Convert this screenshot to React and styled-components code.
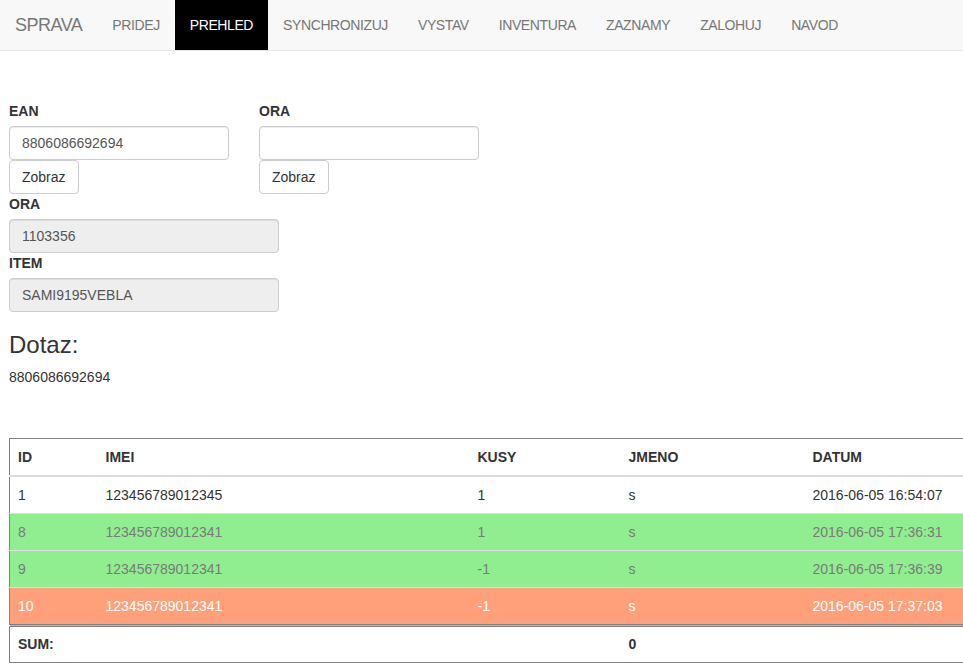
import React from 'react'
import styled, { createGlobalStyle } from 'styled-components'

const GlobalStyle = createGlobalStyle`
  html, body {
    margin: 0;
    overflow-x: hidden;
  }
  body {
    font-family: "Liberation Sans", Arial, sans-serif;
    font-size: 14px;
    line-height: 1.42857;
    color: #333;
    background: #fff;
  }
  * { box-sizing: border-box; }
`

const Navbar = styled.nav`
  display: flex;
  align-items: stretch;
  height: 51px;
  background: #f8f8f8;
  border-bottom: 1px solid #e7e7e7;
`

const Brand = styled.a`
  padding: 15px;
  font-size: 18px;
  line-height: 20px;
  letter-spacing: -0.5px;
  color: #777;
`

const NavList = styled.ul`
  display: flex;
  margin: 0;
  padding: 0;
  list-style: none;
`

const NavItem = styled.li`
  padding: 15px;
  line-height: 20px;
  letter-spacing: -0.4px;
  color: ${({ $active }) => ($active ? '#fff' : '#777')};
  background: ${({ $active }) => ($active ? '#000' : 'transparent')};
`

const Main = styled.main`
  padding: 50px 9px 0;
`

const FormRow = styled.div`
  display: flex;
  gap: 30px;
`

const FormCol = styled.div`
  display: flex;
  flex-direction: column;
  align-items: flex-start;
  width: 220px;
`

const Label = styled.label`
  display: block;
  font-weight: bold;
  line-height: 20px;
  margin-bottom: 5px;
`

const Input = styled.input`
  display: block;
  width: ${({ $width }) => $width}px;
  height: 34px;
  padding: 6px 12px;
  font-family: inherit;
  font-size: 14px;
  color: #555;
  background: ${({ disabled }) => (disabled ? '#eee' : '#fff')};
  border: 1px solid #ccc;
  border-radius: 4px;
  box-shadow: inset 0 1px 1px rgba(0, 0, 0, 0.075);
  opacity: 1;
  -webkit-text-fill-color: #555;
`

const Button = styled.button`
  height: 34px;
  padding: 6px 12px;
  font-family: inherit;
  font-size: 14px;
  line-height: 20px;
  color: #333;
  background: #fff;
  border: 1px solid #ccc;
  border-radius: 4px;
`

const Heading = styled.h3`
  margin: 20px 0 10px;
  font-size: 24px;
  font-weight: 500;
  line-height: 1.1;
`

const Query = styled.p`
  margin: 0 0 50px;
`

const Table = styled.table`
  width: 997px;
  border-collapse: collapse;
  border: 1px solid #808080;
  table-layout: fixed;
`

const Th = styled.th`
  padding: 8px;
  text-align: left;
  line-height: 20px;
  border-bottom: 2px solid #ddd;
`

const Row = styled.tr`
  background: ${({ $tone }) =>
    $tone === 'in' ? '#90ee90' : $tone === 'out' ? '#ffa07a' : '#fff'};
  color: ${({ $tone }) =>
    $tone === 'in' ? '#7a7a7a' : $tone === 'out' ? '#fff' : '#333'};
`

const Td = styled.td`
  padding: 8px;
  line-height: 20px;
  border-top: 1px solid #ddd;
`

const SumCell = styled.td`
  padding: 7px 8px 8px;
  line-height: 20px;
  font-weight: ${({ $bold }) => ($bold ? 'bold' : 'normal')};
  border-top: 3px double #808080;
`

const navItems = ['PRIDEJ', 'PREHLED', 'SYNCHRONIZUJ', 'VYSTAV', 'INVENTURA', 'ZAZNAMY', 'ZALOHUJ', 'NAVOD']

const rows = [
  { id: 1, imei: '123456789012345', kusy: 1, jmeno: 's', datum: '2016-06-05 16:54:07' },
  { id: 8, imei: '123456789012341', kusy: 1, jmeno: 's', datum: '2016-06-05 17:36:31', tone: 'in' },
  { id: 9, imei: '123456789012341', kusy: -1, jmeno: 's', datum: '2016-06-05 17:36:39', tone: 'in' },
  { id: 10, imei: '123456789012341', kusy: -1, jmeno: 's', datum: '2016-06-05 17:37:03', tone: 'out' },
]

export default function App() {
  return (
    <>
      <GlobalStyle />
      <Navbar>
        <Brand>SPRAVA</Brand>
        <NavList>
          {navItems.map((item) => (
            <NavItem key={item} $active={item === 'PREHLED'}>
              {item}
            </NavItem>
          ))}
        </NavList>
      </Navbar>
      <Main>
        <FormRow>
          <FormCol>
            <Label>EAN</Label>
            <Input $width={220} defaultValue="8806086692694" />
            <Button>Zobraz</Button>
          </FormCol>
          <FormCol>
            <Label>ORA</Label>
            <Input $width={220} defaultValue="" />
            <Button>Zobraz</Button>
          </FormCol>
        </FormRow>
        <Label>ORA</Label>
        <Input $width={270} disabled value="1103356" readOnly />
        <Label>ITEM</Label>
        <Input $width={270} disabled value="SAMI9195VEBLA" readOnly />
        <Heading>Dotaz:</Heading>
        <Query>8806086692694</Query>
        <Table>
          <colgroup>
            <col style={{ width: 88 }} />
            <col style={{ width: 372 }} />
            <col style={{ width: 151 }} />
            <col style={{ width: 184 }} />
            <col />
          </colgroup>
          <thead>
            <tr>
              <Th>ID</Th>
              <Th>IMEI</Th>
              <Th>KUSY</Th>
              <Th>JMENO</Th>
              <Th>DATUM</Th>
            </tr>
          </thead>
          <tbody>
            {rows.map((r) => (
              <Row key={r.id} $tone={r.tone}>
                <Td>{r.id}</Td>
                <Td>{r.imei}</Td>
                <Td>{r.kusy}</Td>
                <Td>{r.jmeno}</Td>
                <Td>{r.datum}</Td>
              </Row>
            ))}
          </tbody>
          <tfoot>
            <tr>
              <SumCell $bold>SUM:</SumCell>
              <SumCell />
              <SumCell />
              <SumCell $bold>0</SumCell>
              <SumCell />
            </tr>
          </tfoot>
        </Table>
      </Main>
    </>
  )
}
